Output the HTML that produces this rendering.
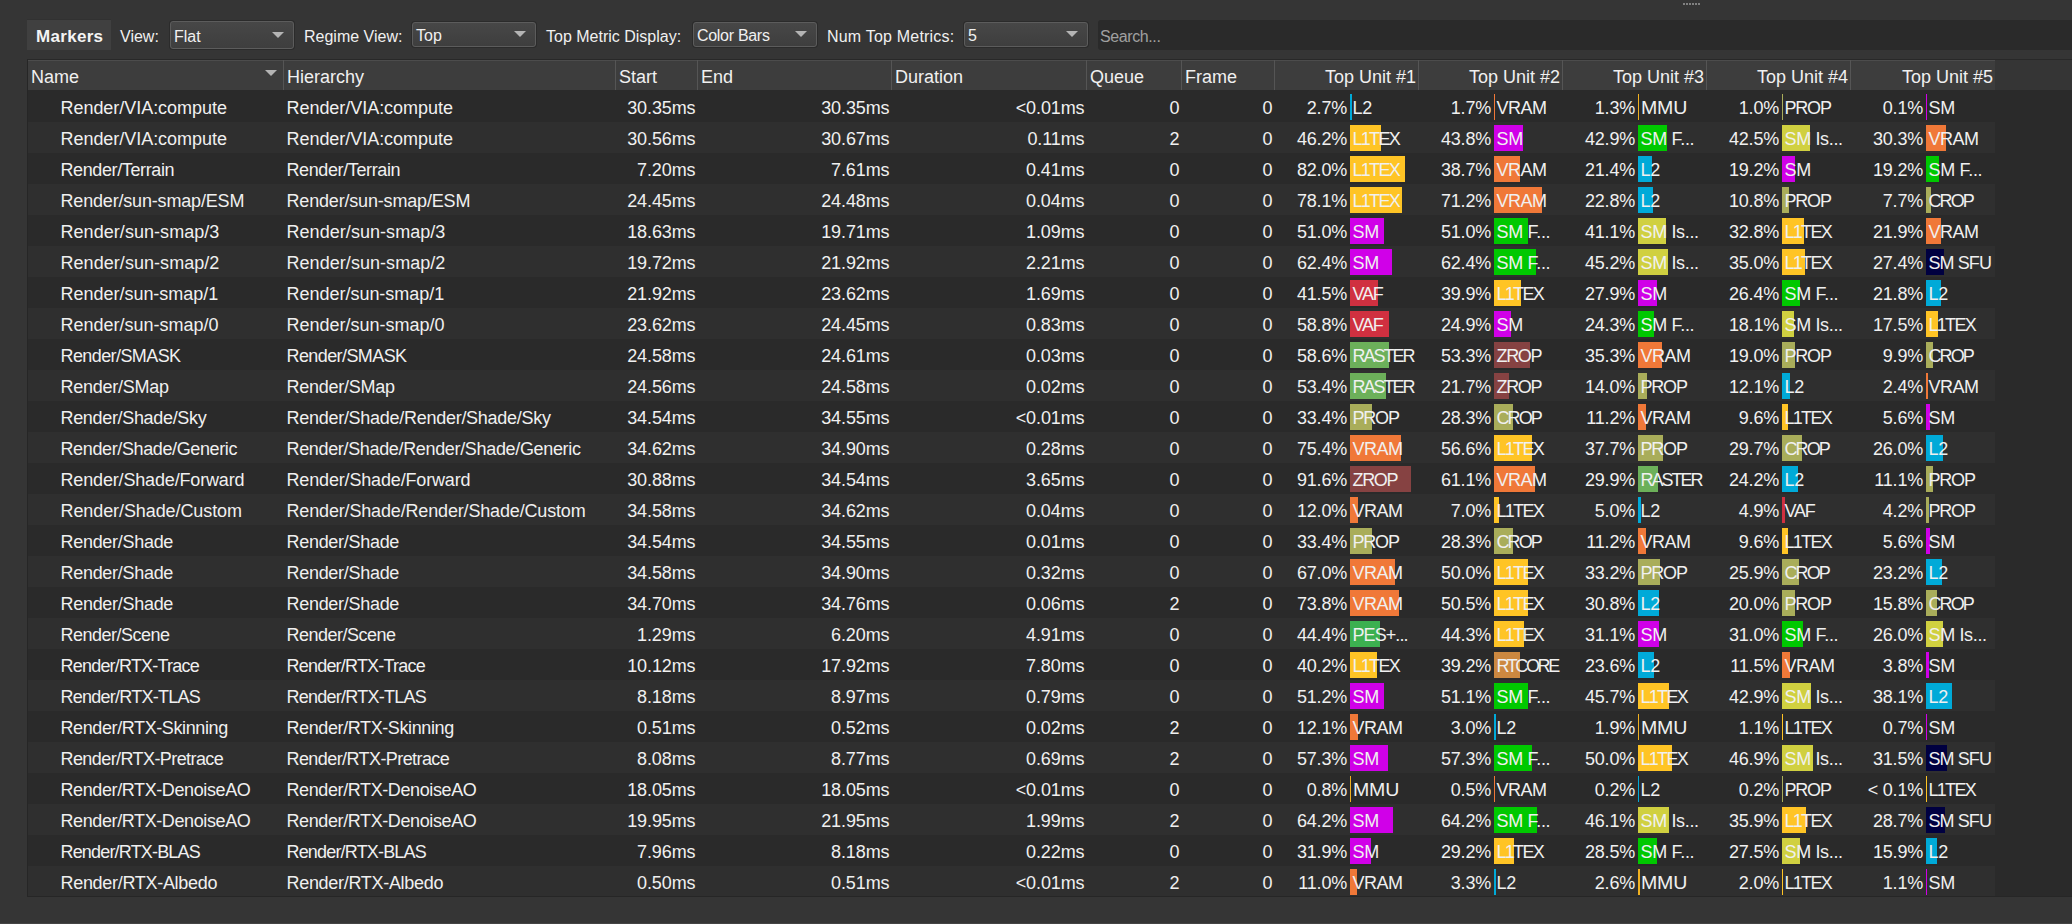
<!DOCTYPE html><html><head><meta charset="utf-8"><style>
html,body{margin:0;padding:0;width:2072px;height:924px;overflow:hidden;background:#353535;}
body{position:relative;font-family:"Liberation Sans",sans-serif;color:#f0f0f0;}
.a{position:absolute;white-space:pre;}
.tb{font-size:16px;line-height:28px;margin-top:2px;}
.combo{position:absolute;width:122px;border:1px solid #5c5c5c;border-radius:3px;background:linear-gradient(#474747,#3e3e3e);box-shadow:0 0 0 1px #2b2b2b;}
.combo .v{position:absolute;left:4px;top:2px;line-height:26px;font-size:16px;}
.tri{position:absolute;width:0;height:0;border-left:6px solid transparent;border-right:6px solid transparent;border-top:6px solid #b4b4b4;}
.t{font-size:18px;letter-spacing:-0.2px;line-height:31px;height:31px;margin-top:2px;}
.r{text-align:right;}
.bar{position:absolute;height:26px;}
</style></head><body>

<div class="a" style="left:1683px;top:3px;width:2px;height:2px;background:#808080"></div>
<div class="a" style="left:1686px;top:3px;width:2px;height:2px;background:#808080"></div>
<div class="a" style="left:1689px;top:3px;width:2px;height:2px;background:#808080"></div>
<div class="a" style="left:1692px;top:3px;width:2px;height:2px;background:#808080"></div>
<div class="a" style="left:1695px;top:3px;width:2px;height:2px;background:#808080"></div>
<div class="a" style="left:1698px;top:3px;width:2px;height:2px;background:#808080"></div>
<div class="a" style="left:27px;top:20px;width:84px;height:30px;background:#404040"></div>
<div class="a" style="left:27px;top:19px;width:84px;height:1px;background:#313131"></div>
<div class="a" style="left:36px;top:23px;font:bold 17px/28px 'Liberation Sans';color:#f4f4f4;letter-spacing:0.3px">Markers</div>
<div class="a tb" style="left:120px;top:21px">View:</div>
<div class="a tb" style="left:304px;top:21px">Regime View:</div>
<div class="a tb" style="left:546px;top:21px">Top Metric Display:</div>
<div class="a tb" style="left:827px;top:21px;letter-spacing:0.2px">Num Top Metrics:</div>
<div class="combo" style="left:170px;top:21px;height:26px"><div class="v" style="left:3px;top:2px;letter-spacing:0">Flat</div><div class="tri" style="left:101px;top:10px"></div></div>
<div class="combo" style="left:412px;top:22px;height:23px"><div class="v" style="left:3px;top:0px;letter-spacing:0">Top</div><div class="tri" style="left:101px;top:8px"></div></div>
<div class="combo" style="left:693px;top:22px;height:23px"><div class="v" style="left:3px;top:0px;letter-spacing:-0.3px">Color Bars</div><div class="tri" style="left:101px;top:8px"></div></div>
<div class="combo" style="left:964px;top:22px;height:23px"><div class="v" style="left:3px;top:0px;letter-spacing:0">5</div><div class="tri" style="left:101px;top:8px"></div></div>
<div class="a" style="left:1098px;top:20px;width:980px;height:30px;background:#2a2a2a;border-radius:3px"></div>
<div class="a tb" style="left:1100px;top:21px;color:#a0a0a0;letter-spacing:-0.4px">Search...</div>
<div class="a" style="left:27px;top:59px;width:2045px;height:838px;background:#2a2a2a"></div>
<div class="a" style="left:28px;top:60px;width:2044px;height:30px;background:#353535"></div>
<div class="a" style="left:0;top:923px;width:2072px;height:1px;background:#444444"></div>
<div class="a" style="left:28px;top:60px;width:1967px;height:30px;background:#3d3d3d;border-top:1px solid #4c4c4c;box-sizing:border-box"></div>
<div class="a" style="left:27px;top:59px;width:2045px;height:1px;background:#282828"></div>
<div class="a" style="left:27px;top:59px;width:1px;height:838px;background:#262626"></div>
<div class="a" style="left:283px;top:60px;width:1px;height:30px;background:#555555"></div>
<div class="a" style="left:615px;top:60px;width:1px;height:30px;background:#555555"></div>
<div class="a" style="left:697px;top:60px;width:1px;height:30px;background:#555555"></div>
<div class="a" style="left:891px;top:60px;width:1px;height:30px;background:#555555"></div>
<div class="a" style="left:1086px;top:60px;width:1px;height:30px;background:#555555"></div>
<div class="a" style="left:1181px;top:60px;width:1px;height:30px;background:#555555"></div>
<div class="a" style="left:1274px;top:60px;width:1px;height:30px;background:#555555"></div>
<div class="a" style="left:1418px;top:60px;width:1px;height:30px;background:#555555"></div>
<div class="a" style="left:1562px;top:60px;width:1px;height:30px;background:#555555"></div>
<div class="a" style="left:1706px;top:60px;width:1px;height:30px;background:#555555"></div>
<div class="a" style="left:1850px;top:60px;width:1px;height:30px;background:#555555"></div>
<div class="a t" style="left:31px;top:60px;letter-spacing:0">Name</div>
<div class="a t" style="left:287px;top:60px;letter-spacing:0">Hierarchy</div>
<div class="a t" style="left:619px;top:60px;letter-spacing:0">Start</div>
<div class="a t" style="left:701px;top:60px;letter-spacing:0">End</div>
<div class="a t" style="left:895px;top:60px;letter-spacing:0">Duration</div>
<div class="a t" style="left:1090px;top:60px;letter-spacing:0">Queue</div>
<div class="a t" style="left:1185px;top:60px;letter-spacing:0">Frame</div>
<div class="a t r" style="left:1274px;width:142px;top:60px;letter-spacing:0">Top Unit #1</div>
<div class="a t r" style="left:1418px;width:142px;top:60px;letter-spacing:0">Top Unit #2</div>
<div class="a t r" style="left:1562px;width:142px;top:60px;letter-spacing:0">Top Unit #3</div>
<div class="a t r" style="left:1706px;width:142px;top:60px;letter-spacing:0">Top Unit #4</div>
<div class="a t r" style="left:1850px;width:143px;top:60px;letter-spacing:0">Top Unit #5</div>
<div class="tri" style="left:265px;top:70px"></div>
<div class="a t" style="left:60.5px;top:91px;letter-spacing:-0.041px">Render/VIA:compute</div>
<div class="a t" style="left:286.5px;top:91px;letter-spacing:-0.041px">Render/VIA:compute</div>
<div class="a t r" style="left:615px;width:80.5px;top:91px;letter-spacing:-0.1px">30.35ms</div>
<div class="a t r" style="left:697px;width:192.5px;top:91px;letter-spacing:-0.1px">30.35ms</div>
<div class="a t r" style="left:891px;width:193.5px;top:91px;letter-spacing:-0.1px">&lt;0.01ms</div>
<div class="a t r" style="left:1086px;width:93.5px;top:91px;letter-spacing:-0.1px">0</div>
<div class="a t r" style="left:1181px;width:91.5px;top:91px;letter-spacing:-0.1px">0</div>
<div class="a t r" style="left:1274px;width:73px;top:91px">2.7%</div>
<div class="bar" style="left:1350px;top:94px;width:2px;background:#00aad8"></div>
<div class="a t" style="left:1352.5px;top:91px;letter-spacing:-0.20px">L2</div>
<div class="a t r" style="left:1418px;width:73px;top:91px">1.7%</div>
<div class="bar" style="left:1494px;top:94px;width:1px;background:#f07838"></div>
<div class="a t" style="left:1496.5px;top:91px;letter-spacing:-0.53px">VRAM</div>
<div class="a t r" style="left:1562px;width:73px;top:91px">1.3%</div>
<div class="bar" style="left:1638px;top:94px;width:1px;background:#f0b020"></div>
<div class="a t" style="left:1640.5px;top:91px;letter-spacing:-0.20px;transform:scaleX(1.087);transform-origin:0 0">MMU</div>
<div class="a t r" style="left:1706px;width:73px;top:91px">1.0%</div>
<div class="bar" style="left:1782px;top:94px;width:1px;background:#a9ad5a"></div>
<div class="a t" style="left:1784.5px;top:91px;letter-spacing:-1.20px">PROP</div>
<div class="a t r" style="left:1850px;width:73px;top:91px">0.1%</div>
<div class="bar" style="left:1926px;top:94px;width:1px;background:#d000e8"></div>
<div class="a t" style="left:1928.5px;top:91px;letter-spacing:-0.20px">SM</div>
<div class="a" style="left:28px;top:122px;width:1967px;height:31px;background:#2f2f2f"></div>
<div class="a t" style="left:60.5px;top:122px;letter-spacing:-0.041px">Render/VIA:compute</div>
<div class="a t" style="left:286.5px;top:122px;letter-spacing:-0.041px">Render/VIA:compute</div>
<div class="a t r" style="left:615px;width:80.5px;top:122px;letter-spacing:-0.1px">30.56ms</div>
<div class="a t r" style="left:697px;width:192.5px;top:122px;letter-spacing:-0.1px">30.67ms</div>
<div class="a t r" style="left:891px;width:193.5px;top:122px;letter-spacing:-0.1px">0.11ms</div>
<div class="a t r" style="left:1086px;width:93.5px;top:122px;letter-spacing:-0.1px">2</div>
<div class="a t r" style="left:1181px;width:91.5px;top:122px;letter-spacing:-0.1px">0</div>
<div class="a t r" style="left:1274px;width:73px;top:122px">46.2%</div>
<div class="bar" style="left:1350px;top:125px;width:31px;background:#ffc425"></div>
<div class="a t" style="left:1352.5px;top:122px;letter-spacing:-1.70px">L1TEX</div>
<div class="a t r" style="left:1418px;width:73px;top:122px">43.8%</div>
<div class="bar" style="left:1494px;top:125px;width:29px;background:#d000e8"></div>
<div class="a t" style="left:1496.5px;top:122px;letter-spacing:-0.20px">SM</div>
<div class="a t r" style="left:1562px;width:73px;top:122px">42.9%</div>
<div class="bar" style="left:1638px;top:125px;width:29px;background:#00c800"></div>
<div class="a t" style="left:1640.5px;top:122px;letter-spacing:-0.32px">SM F...</div>
<div class="a t r" style="left:1706px;width:73px;top:122px">42.5%</div>
<div class="bar" style="left:1782px;top:125px;width:28px;background:#d0d040"></div>
<div class="a t" style="left:1784.5px;top:122px;letter-spacing:-0.35px">SM Is...</div>
<div class="a t r" style="left:1850px;width:73px;top:122px">30.3%</div>
<div class="bar" style="left:1926px;top:125px;width:20px;background:#f07838"></div>
<div class="a t" style="left:1928.5px;top:122px;letter-spacing:-0.53px">VRAM</div>
<div class="a t" style="left:60.5px;top:153px;letter-spacing:-0.385px">Render/Terrain</div>
<div class="a t" style="left:286.5px;top:153px;letter-spacing:-0.385px">Render/Terrain</div>
<div class="a t r" style="left:615px;width:80.5px;top:153px;letter-spacing:-0.1px">7.20ms</div>
<div class="a t r" style="left:697px;width:192.5px;top:153px;letter-spacing:-0.1px">7.61ms</div>
<div class="a t r" style="left:891px;width:193.5px;top:153px;letter-spacing:-0.1px">0.41ms</div>
<div class="a t r" style="left:1086px;width:93.5px;top:153px;letter-spacing:-0.1px">0</div>
<div class="a t r" style="left:1181px;width:91.5px;top:153px;letter-spacing:-0.1px">0</div>
<div class="a t r" style="left:1274px;width:73px;top:153px">82.0%</div>
<div class="bar" style="left:1350px;top:156px;width:55px;background:#ffc425"></div>
<div class="a t" style="left:1352.5px;top:153px;letter-spacing:-1.70px">L1TEX</div>
<div class="a t r" style="left:1418px;width:73px;top:153px">38.7%</div>
<div class="bar" style="left:1494px;top:156px;width:26px;background:#f07838"></div>
<div class="a t" style="left:1496.5px;top:153px;letter-spacing:-0.53px">VRAM</div>
<div class="a t r" style="left:1562px;width:73px;top:153px">21.4%</div>
<div class="bar" style="left:1638px;top:156px;width:14px;background:#00aad8"></div>
<div class="a t" style="left:1640.5px;top:153px;letter-spacing:-0.20px">L2</div>
<div class="a t r" style="left:1706px;width:73px;top:153px">19.2%</div>
<div class="bar" style="left:1782px;top:156px;width:13px;background:#d000e8"></div>
<div class="a t" style="left:1784.5px;top:153px;letter-spacing:-0.20px">SM</div>
<div class="a t r" style="left:1850px;width:73px;top:153px">19.2%</div>
<div class="bar" style="left:1926px;top:156px;width:13px;background:#00c800"></div>
<div class="a t" style="left:1928.5px;top:153px;letter-spacing:-0.32px">SM F...</div>
<div class="a" style="left:28px;top:184px;width:1967px;height:31px;background:#2f2f2f"></div>
<div class="a t" style="left:60.5px;top:184px;letter-spacing:-0.178px">Render/sun-smap/ESM</div>
<div class="a t" style="left:286.5px;top:184px;letter-spacing:-0.178px">Render/sun-smap/ESM</div>
<div class="a t r" style="left:615px;width:80.5px;top:184px;letter-spacing:-0.1px">24.45ms</div>
<div class="a t r" style="left:697px;width:192.5px;top:184px;letter-spacing:-0.1px">24.48ms</div>
<div class="a t r" style="left:891px;width:193.5px;top:184px;letter-spacing:-0.1px">0.04ms</div>
<div class="a t r" style="left:1086px;width:93.5px;top:184px;letter-spacing:-0.1px">0</div>
<div class="a t r" style="left:1181px;width:91.5px;top:184px;letter-spacing:-0.1px">0</div>
<div class="a t r" style="left:1274px;width:73px;top:184px">78.1%</div>
<div class="bar" style="left:1350px;top:187px;width:52px;background:#ffc425"></div>
<div class="a t" style="left:1352.5px;top:184px;letter-spacing:-1.70px">L1TEX</div>
<div class="a t r" style="left:1418px;width:73px;top:184px">71.2%</div>
<div class="bar" style="left:1494px;top:187px;width:48px;background:#f07838"></div>
<div class="a t" style="left:1496.5px;top:184px;letter-spacing:-0.53px">VRAM</div>
<div class="a t r" style="left:1562px;width:73px;top:184px">22.8%</div>
<div class="bar" style="left:1638px;top:187px;width:15px;background:#00aad8"></div>
<div class="a t" style="left:1640.5px;top:184px;letter-spacing:-0.20px">L2</div>
<div class="a t r" style="left:1706px;width:73px;top:184px">10.8%</div>
<div class="bar" style="left:1782px;top:187px;width:7px;background:#a9ad5a"></div>
<div class="a t" style="left:1784.5px;top:184px;letter-spacing:-1.20px">PROP</div>
<div class="a t r" style="left:1850px;width:73px;top:184px">7.7%</div>
<div class="bar" style="left:1926px;top:187px;width:5px;background:#a9ad5a"></div>
<div class="a t" style="left:1928.5px;top:184px;letter-spacing:-1.93px">CROP</div>
<div class="a t" style="left:60.5px;top:215px;letter-spacing:0.05px">Render/sun-smap/3</div>
<div class="a t" style="left:286.5px;top:215px;letter-spacing:0.05px">Render/sun-smap/3</div>
<div class="a t r" style="left:615px;width:80.5px;top:215px;letter-spacing:-0.1px">18.63ms</div>
<div class="a t r" style="left:697px;width:192.5px;top:215px;letter-spacing:-0.1px">19.71ms</div>
<div class="a t r" style="left:891px;width:193.5px;top:215px;letter-spacing:-0.1px">1.09ms</div>
<div class="a t r" style="left:1086px;width:93.5px;top:215px;letter-spacing:-0.1px">0</div>
<div class="a t r" style="left:1181px;width:91.5px;top:215px;letter-spacing:-0.1px">0</div>
<div class="a t r" style="left:1274px;width:73px;top:215px">51.0%</div>
<div class="bar" style="left:1350px;top:218px;width:34px;background:#d000e8"></div>
<div class="a t" style="left:1352.5px;top:215px;letter-spacing:-0.20px">SM</div>
<div class="a t r" style="left:1418px;width:73px;top:215px">51.0%</div>
<div class="bar" style="left:1494px;top:218px;width:34px;background:#00c800"></div>
<div class="a t" style="left:1496.5px;top:215px;letter-spacing:-0.32px">SM F...</div>
<div class="a t r" style="left:1562px;width:73px;top:215px">41.1%</div>
<div class="bar" style="left:1638px;top:218px;width:28px;background:#d0d040"></div>
<div class="a t" style="left:1640.5px;top:215px;letter-spacing:-0.35px">SM Is...</div>
<div class="a t r" style="left:1706px;width:73px;top:215px">32.8%</div>
<div class="bar" style="left:1782px;top:218px;width:22px;background:#ffc425"></div>
<div class="a t" style="left:1784.5px;top:215px;letter-spacing:-1.70px">L1TEX</div>
<div class="a t r" style="left:1850px;width:73px;top:215px">21.9%</div>
<div class="bar" style="left:1926px;top:218px;width:15px;background:#f07838"></div>
<div class="a t" style="left:1928.5px;top:215px;letter-spacing:-0.53px">VRAM</div>
<div class="a" style="left:28px;top:246px;width:1967px;height:31px;background:#2f2f2f"></div>
<div class="a t" style="left:60.5px;top:246px;letter-spacing:0.05px">Render/sun-smap/2</div>
<div class="a t" style="left:286.5px;top:246px;letter-spacing:0.05px">Render/sun-smap/2</div>
<div class="a t r" style="left:615px;width:80.5px;top:246px;letter-spacing:-0.1px">19.72ms</div>
<div class="a t r" style="left:697px;width:192.5px;top:246px;letter-spacing:-0.1px">21.92ms</div>
<div class="a t r" style="left:891px;width:193.5px;top:246px;letter-spacing:-0.1px">2.21ms</div>
<div class="a t r" style="left:1086px;width:93.5px;top:246px;letter-spacing:-0.1px">0</div>
<div class="a t r" style="left:1181px;width:91.5px;top:246px;letter-spacing:-0.1px">0</div>
<div class="a t r" style="left:1274px;width:73px;top:246px">62.4%</div>
<div class="bar" style="left:1350px;top:249px;width:42px;background:#d000e8"></div>
<div class="a t" style="left:1352.5px;top:246px;letter-spacing:-0.20px">SM</div>
<div class="a t r" style="left:1418px;width:73px;top:246px">62.4%</div>
<div class="bar" style="left:1494px;top:249px;width:42px;background:#00c800"></div>
<div class="a t" style="left:1496.5px;top:246px;letter-spacing:-0.32px">SM F...</div>
<div class="a t r" style="left:1562px;width:73px;top:246px">45.2%</div>
<div class="bar" style="left:1638px;top:249px;width:30px;background:#d0d040"></div>
<div class="a t" style="left:1640.5px;top:246px;letter-spacing:-0.35px">SM Is...</div>
<div class="a t r" style="left:1706px;width:73px;top:246px">35.0%</div>
<div class="bar" style="left:1782px;top:249px;width:23px;background:#ffc425"></div>
<div class="a t" style="left:1784.5px;top:246px;letter-spacing:-1.70px">L1TEX</div>
<div class="a t r" style="left:1850px;width:73px;top:246px">27.4%</div>
<div class="bar" style="left:1926px;top:249px;width:18px;background:#000040"></div>
<div class="a t" style="left:1928.5px;top:246px;letter-spacing:-0.91px">SM SFU</div>
<div class="a t" style="left:60.5px;top:277px;letter-spacing:-0.019px">Render/sun-smap/1</div>
<div class="a t" style="left:286.5px;top:277px;letter-spacing:-0.019px">Render/sun-smap/1</div>
<div class="a t r" style="left:615px;width:80.5px;top:277px;letter-spacing:-0.1px">21.92ms</div>
<div class="a t r" style="left:697px;width:192.5px;top:277px;letter-spacing:-0.1px">23.62ms</div>
<div class="a t r" style="left:891px;width:193.5px;top:277px;letter-spacing:-0.1px">1.69ms</div>
<div class="a t r" style="left:1086px;width:93.5px;top:277px;letter-spacing:-0.1px">0</div>
<div class="a t r" style="left:1181px;width:91.5px;top:277px;letter-spacing:-0.1px">0</div>
<div class="a t r" style="left:1274px;width:73px;top:277px">41.5%</div>
<div class="bar" style="left:1350px;top:280px;width:28px;background:#d03040"></div>
<div class="a t" style="left:1352.5px;top:277px;letter-spacing:-1.20px">VAF</div>
<div class="a t r" style="left:1418px;width:73px;top:277px">39.9%</div>
<div class="bar" style="left:1494px;top:280px;width:27px;background:#ffc425"></div>
<div class="a t" style="left:1496.5px;top:277px;letter-spacing:-1.70px">L1TEX</div>
<div class="a t r" style="left:1562px;width:73px;top:277px">27.9%</div>
<div class="bar" style="left:1638px;top:280px;width:19px;background:#d000e8"></div>
<div class="a t" style="left:1640.5px;top:277px;letter-spacing:-0.20px">SM</div>
<div class="a t r" style="left:1706px;width:73px;top:277px">26.4%</div>
<div class="bar" style="left:1782px;top:280px;width:18px;background:#00c800"></div>
<div class="a t" style="left:1784.5px;top:277px;letter-spacing:-0.32px">SM F...</div>
<div class="a t r" style="left:1850px;width:73px;top:277px">21.8%</div>
<div class="bar" style="left:1926px;top:280px;width:15px;background:#00aad8"></div>
<div class="a t" style="left:1928.5px;top:277px;letter-spacing:-0.20px">L2</div>
<div class="a" style="left:28px;top:308px;width:1967px;height:31px;background:#2f2f2f"></div>
<div class="a t" style="left:60.5px;top:308px;letter-spacing:0.0px">Render/sun-smap/0</div>
<div class="a t" style="left:286.5px;top:308px;letter-spacing:0.0px">Render/sun-smap/0</div>
<div class="a t r" style="left:615px;width:80.5px;top:308px;letter-spacing:-0.1px">23.62ms</div>
<div class="a t r" style="left:697px;width:192.5px;top:308px;letter-spacing:-0.1px">24.45ms</div>
<div class="a t r" style="left:891px;width:193.5px;top:308px;letter-spacing:-0.1px">0.83ms</div>
<div class="a t r" style="left:1086px;width:93.5px;top:308px;letter-spacing:-0.1px">0</div>
<div class="a t r" style="left:1181px;width:91.5px;top:308px;letter-spacing:-0.1px">0</div>
<div class="a t r" style="left:1274px;width:73px;top:308px">58.8%</div>
<div class="bar" style="left:1350px;top:311px;width:39px;background:#d03040"></div>
<div class="a t" style="left:1352.5px;top:308px;letter-spacing:-1.20px">VAF</div>
<div class="a t r" style="left:1418px;width:73px;top:308px">24.9%</div>
<div class="bar" style="left:1494px;top:311px;width:17px;background:#d000e8"></div>
<div class="a t" style="left:1496.5px;top:308px;letter-spacing:-0.20px">SM</div>
<div class="a t r" style="left:1562px;width:73px;top:308px">24.3%</div>
<div class="bar" style="left:1638px;top:311px;width:16px;background:#00c800"></div>
<div class="a t" style="left:1640.5px;top:308px;letter-spacing:-0.32px">SM F...</div>
<div class="a t r" style="left:1706px;width:73px;top:308px">18.1%</div>
<div class="bar" style="left:1782px;top:311px;width:12px;background:#d0d040"></div>
<div class="a t" style="left:1784.5px;top:308px;letter-spacing:-0.35px">SM Is...</div>
<div class="a t r" style="left:1850px;width:73px;top:308px">17.5%</div>
<div class="bar" style="left:1926px;top:311px;width:12px;background:#ffc425"></div>
<div class="a t" style="left:1928.5px;top:308px;letter-spacing:-1.70px">L1TEX</div>
<div class="a t" style="left:60.5px;top:339px;letter-spacing:-0.591px">Render/SMASK</div>
<div class="a t" style="left:286.5px;top:339px;letter-spacing:-0.591px">Render/SMASK</div>
<div class="a t r" style="left:615px;width:80.5px;top:339px;letter-spacing:-0.1px">24.58ms</div>
<div class="a t r" style="left:697px;width:192.5px;top:339px;letter-spacing:-0.1px">24.61ms</div>
<div class="a t r" style="left:891px;width:193.5px;top:339px;letter-spacing:-0.1px">0.03ms</div>
<div class="a t r" style="left:1086px;width:93.5px;top:339px;letter-spacing:-0.1px">0</div>
<div class="a t r" style="left:1181px;width:91.5px;top:339px;letter-spacing:-0.1px">0</div>
<div class="a t r" style="left:1274px;width:73px;top:339px">58.6%</div>
<div class="bar" style="left:1350px;top:342px;width:39px;background:#6cb05a"></div>
<div class="a t" style="left:1352.5px;top:339px;letter-spacing:-2.00px">RASTER</div>
<div class="a t r" style="left:1418px;width:73px;top:339px">53.3%</div>
<div class="bar" style="left:1494px;top:342px;width:36px;background:#864242"></div>
<div class="a t" style="left:1496.5px;top:339px;letter-spacing:-1.33px">ZROP</div>
<div class="a t r" style="left:1562px;width:73px;top:339px">35.3%</div>
<div class="bar" style="left:1638px;top:342px;width:24px;background:#f07838"></div>
<div class="a t" style="left:1640.5px;top:339px;letter-spacing:-0.53px">VRAM</div>
<div class="a t r" style="left:1706px;width:73px;top:339px">19.0%</div>
<div class="bar" style="left:1782px;top:342px;width:13px;background:#a9ad5a"></div>
<div class="a t" style="left:1784.5px;top:339px;letter-spacing:-1.20px">PROP</div>
<div class="a t r" style="left:1850px;width:73px;top:339px">9.9%</div>
<div class="bar" style="left:1926px;top:342px;width:7px;background:#a9ad5a"></div>
<div class="a t" style="left:1928.5px;top:339px;letter-spacing:-1.93px">CROP</div>
<div class="a" style="left:28px;top:370px;width:1967px;height:31px;background:#2f2f2f"></div>
<div class="a t" style="left:60.5px;top:370px;letter-spacing:-0.25px">Render/SMap</div>
<div class="a t" style="left:286.5px;top:370px;letter-spacing:-0.25px">Render/SMap</div>
<div class="a t r" style="left:615px;width:80.5px;top:370px;letter-spacing:-0.1px">24.56ms</div>
<div class="a t r" style="left:697px;width:192.5px;top:370px;letter-spacing:-0.1px">24.58ms</div>
<div class="a t r" style="left:891px;width:193.5px;top:370px;letter-spacing:-0.1px">0.02ms</div>
<div class="a t r" style="left:1086px;width:93.5px;top:370px;letter-spacing:-0.1px">0</div>
<div class="a t r" style="left:1181px;width:91.5px;top:370px;letter-spacing:-0.1px">0</div>
<div class="a t r" style="left:1274px;width:73px;top:370px">53.4%</div>
<div class="bar" style="left:1350px;top:373px;width:36px;background:#6cb05a"></div>
<div class="a t" style="left:1352.5px;top:370px;letter-spacing:-2.00px">RASTER</div>
<div class="a t r" style="left:1418px;width:73px;top:370px">21.7%</div>
<div class="bar" style="left:1494px;top:373px;width:15px;background:#864242"></div>
<div class="a t" style="left:1496.5px;top:370px;letter-spacing:-1.33px">ZROP</div>
<div class="a t r" style="left:1562px;width:73px;top:370px">14.0%</div>
<div class="bar" style="left:1638px;top:373px;width:9px;background:#a9ad5a"></div>
<div class="a t" style="left:1640.5px;top:370px;letter-spacing:-1.20px">PROP</div>
<div class="a t r" style="left:1706px;width:73px;top:370px">12.1%</div>
<div class="bar" style="left:1782px;top:373px;width:8px;background:#00aad8"></div>
<div class="a t" style="left:1784.5px;top:370px;letter-spacing:-0.20px">L2</div>
<div class="a t r" style="left:1850px;width:73px;top:370px">2.4%</div>
<div class="bar" style="left:1926px;top:373px;width:2px;background:#f07838"></div>
<div class="a t" style="left:1928.5px;top:370px;letter-spacing:-0.53px">VRAM</div>
<div class="a t" style="left:60.5px;top:401px;letter-spacing:-0.327px">Render/Shade/Sky</div>
<div class="a t" style="left:286.5px;top:401px;letter-spacing:-0.275px">Render/Shade/Render/Shade/Sky</div>
<div class="a t r" style="left:615px;width:80.5px;top:401px;letter-spacing:-0.1px">34.54ms</div>
<div class="a t r" style="left:697px;width:192.5px;top:401px;letter-spacing:-0.1px">34.55ms</div>
<div class="a t r" style="left:891px;width:193.5px;top:401px;letter-spacing:-0.1px">&lt;0.01ms</div>
<div class="a t r" style="left:1086px;width:93.5px;top:401px;letter-spacing:-0.1px">0</div>
<div class="a t r" style="left:1181px;width:91.5px;top:401px;letter-spacing:-0.1px">0</div>
<div class="a t r" style="left:1274px;width:73px;top:401px">33.4%</div>
<div class="bar" style="left:1350px;top:404px;width:22px;background:#a9ad5a"></div>
<div class="a t" style="left:1352.5px;top:401px;letter-spacing:-1.20px">PROP</div>
<div class="a t r" style="left:1418px;width:73px;top:401px">28.3%</div>
<div class="bar" style="left:1494px;top:404px;width:19px;background:#a9ad5a"></div>
<div class="a t" style="left:1496.5px;top:401px;letter-spacing:-1.93px">CROP</div>
<div class="a t r" style="left:1562px;width:73px;top:401px">11.2%</div>
<div class="bar" style="left:1638px;top:404px;width:8px;background:#f07838"></div>
<div class="a t" style="left:1640.5px;top:401px;letter-spacing:-0.53px">VRAM</div>
<div class="a t r" style="left:1706px;width:73px;top:401px">9.6%</div>
<div class="bar" style="left:1782px;top:404px;width:6px;background:#ffc425"></div>
<div class="a t" style="left:1784.5px;top:401px;letter-spacing:-1.70px">L1TEX</div>
<div class="a t r" style="left:1850px;width:73px;top:401px">5.6%</div>
<div class="bar" style="left:1926px;top:404px;width:4px;background:#d000e8"></div>
<div class="a t" style="left:1928.5px;top:401px;letter-spacing:-0.20px">SM</div>
<div class="a" style="left:28px;top:432px;width:1967px;height:31px;background:#2f2f2f"></div>
<div class="a t" style="left:60.5px;top:432px;letter-spacing:-0.379px">Render/Shade/Generic</div>
<div class="a t" style="left:286.5px;top:432px;letter-spacing:-0.338px">Render/Shade/Render/Shade/Generic</div>
<div class="a t r" style="left:615px;width:80.5px;top:432px;letter-spacing:-0.1px">34.62ms</div>
<div class="a t r" style="left:697px;width:192.5px;top:432px;letter-spacing:-0.1px">34.90ms</div>
<div class="a t r" style="left:891px;width:193.5px;top:432px;letter-spacing:-0.1px">0.28ms</div>
<div class="a t r" style="left:1086px;width:93.5px;top:432px;letter-spacing:-0.1px">0</div>
<div class="a t r" style="left:1181px;width:91.5px;top:432px;letter-spacing:-0.1px">0</div>
<div class="a t r" style="left:1274px;width:73px;top:432px">75.4%</div>
<div class="bar" style="left:1350px;top:435px;width:51px;background:#f07838"></div>
<div class="a t" style="left:1352.5px;top:432px;letter-spacing:-0.53px">VRAM</div>
<div class="a t r" style="left:1418px;width:73px;top:432px">56.6%</div>
<div class="bar" style="left:1494px;top:435px;width:38px;background:#ffc425"></div>
<div class="a t" style="left:1496.5px;top:432px;letter-spacing:-1.70px">L1TEX</div>
<div class="a t r" style="left:1562px;width:73px;top:432px">37.7%</div>
<div class="bar" style="left:1638px;top:435px;width:25px;background:#a9ad5a"></div>
<div class="a t" style="left:1640.5px;top:432px;letter-spacing:-1.20px">PROP</div>
<div class="a t r" style="left:1706px;width:73px;top:432px">29.7%</div>
<div class="bar" style="left:1782px;top:435px;width:20px;background:#a9ad5a"></div>
<div class="a t" style="left:1784.5px;top:432px;letter-spacing:-1.93px">CROP</div>
<div class="a t r" style="left:1850px;width:73px;top:432px">26.0%</div>
<div class="bar" style="left:1926px;top:435px;width:17px;background:#00aad8"></div>
<div class="a t" style="left:1928.5px;top:432px;letter-spacing:-0.20px">L2</div>
<div class="a t" style="left:60.5px;top:463px;letter-spacing:-0.163px">Render/Shade/Forward</div>
<div class="a t" style="left:286.5px;top:463px;letter-spacing:-0.163px">Render/Shade/Forward</div>
<div class="a t r" style="left:615px;width:80.5px;top:463px;letter-spacing:-0.1px">30.88ms</div>
<div class="a t r" style="left:697px;width:192.5px;top:463px;letter-spacing:-0.1px">34.54ms</div>
<div class="a t r" style="left:891px;width:193.5px;top:463px;letter-spacing:-0.1px">3.65ms</div>
<div class="a t r" style="left:1086px;width:93.5px;top:463px;letter-spacing:-0.1px">0</div>
<div class="a t r" style="left:1181px;width:91.5px;top:463px;letter-spacing:-0.1px">0</div>
<div class="a t r" style="left:1274px;width:73px;top:463px">91.6%</div>
<div class="bar" style="left:1350px;top:466px;width:61px;background:#864242"></div>
<div class="a t" style="left:1352.5px;top:463px;letter-spacing:-1.33px">ZROP</div>
<div class="a t r" style="left:1418px;width:73px;top:463px">61.1%</div>
<div class="bar" style="left:1494px;top:466px;width:41px;background:#f07838"></div>
<div class="a t" style="left:1496.5px;top:463px;letter-spacing:-0.53px">VRAM</div>
<div class="a t r" style="left:1562px;width:73px;top:463px">29.9%</div>
<div class="bar" style="left:1638px;top:466px;width:20px;background:#6cb05a"></div>
<div class="a t" style="left:1640.5px;top:463px;letter-spacing:-2.00px">RASTER</div>
<div class="a t r" style="left:1706px;width:73px;top:463px">24.2%</div>
<div class="bar" style="left:1782px;top:466px;width:16px;background:#00aad8"></div>
<div class="a t" style="left:1784.5px;top:463px;letter-spacing:-0.20px">L2</div>
<div class="a t r" style="left:1850px;width:73px;top:463px">11.1%</div>
<div class="bar" style="left:1926px;top:466px;width:7px;background:#a9ad5a"></div>
<div class="a t" style="left:1928.5px;top:463px;letter-spacing:-1.20px">PROP</div>
<div class="a" style="left:28px;top:494px;width:1967px;height:31px;background:#2f2f2f"></div>
<div class="a t" style="left:60.5px;top:494px;letter-spacing:-0.089px">Render/Shade/Custom</div>
<div class="a t" style="left:286.5px;top:494px;letter-spacing:-0.161px">Render/Shade/Render/Shade/Custom</div>
<div class="a t r" style="left:615px;width:80.5px;top:494px;letter-spacing:-0.1px">34.58ms</div>
<div class="a t r" style="left:697px;width:192.5px;top:494px;letter-spacing:-0.1px">34.62ms</div>
<div class="a t r" style="left:891px;width:193.5px;top:494px;letter-spacing:-0.1px">0.04ms</div>
<div class="a t r" style="left:1086px;width:93.5px;top:494px;letter-spacing:-0.1px">0</div>
<div class="a t r" style="left:1181px;width:91.5px;top:494px;letter-spacing:-0.1px">0</div>
<div class="a t r" style="left:1274px;width:73px;top:494px">12.0%</div>
<div class="bar" style="left:1350px;top:497px;width:8px;background:#f07838"></div>
<div class="a t" style="left:1352.5px;top:494px;letter-spacing:-0.53px">VRAM</div>
<div class="a t r" style="left:1418px;width:73px;top:494px">7.0%</div>
<div class="bar" style="left:1494px;top:497px;width:5px;background:#ffc425"></div>
<div class="a t" style="left:1496.5px;top:494px;letter-spacing:-1.70px">L1TEX</div>
<div class="a t r" style="left:1562px;width:73px;top:494px">5.0%</div>
<div class="bar" style="left:1638px;top:497px;width:3px;background:#00aad8"></div>
<div class="a t" style="left:1640.5px;top:494px;letter-spacing:-0.20px">L2</div>
<div class="a t r" style="left:1706px;width:73px;top:494px">4.9%</div>
<div class="bar" style="left:1782px;top:497px;width:3px;background:#d03040"></div>
<div class="a t" style="left:1784.5px;top:494px;letter-spacing:-1.20px">VAF</div>
<div class="a t r" style="left:1850px;width:73px;top:494px">4.2%</div>
<div class="bar" style="left:1926px;top:497px;width:3px;background:#a9ad5a"></div>
<div class="a t" style="left:1928.5px;top:494px;letter-spacing:-1.20px">PROP</div>
<div class="a t" style="left:60.5px;top:525px;letter-spacing:-0.291px">Render/Shade</div>
<div class="a t" style="left:286.5px;top:525px;letter-spacing:-0.291px">Render/Shade</div>
<div class="a t r" style="left:615px;width:80.5px;top:525px;letter-spacing:-0.1px">34.54ms</div>
<div class="a t r" style="left:697px;width:192.5px;top:525px;letter-spacing:-0.1px">34.55ms</div>
<div class="a t r" style="left:891px;width:193.5px;top:525px;letter-spacing:-0.1px">0.01ms</div>
<div class="a t r" style="left:1086px;width:93.5px;top:525px;letter-spacing:-0.1px">0</div>
<div class="a t r" style="left:1181px;width:91.5px;top:525px;letter-spacing:-0.1px">0</div>
<div class="a t r" style="left:1274px;width:73px;top:525px">33.4%</div>
<div class="bar" style="left:1350px;top:528px;width:22px;background:#a9ad5a"></div>
<div class="a t" style="left:1352.5px;top:525px;letter-spacing:-1.20px">PROP</div>
<div class="a t r" style="left:1418px;width:73px;top:525px">28.3%</div>
<div class="bar" style="left:1494px;top:528px;width:19px;background:#a9ad5a"></div>
<div class="a t" style="left:1496.5px;top:525px;letter-spacing:-1.93px">CROP</div>
<div class="a t r" style="left:1562px;width:73px;top:525px">11.2%</div>
<div class="bar" style="left:1638px;top:528px;width:8px;background:#f07838"></div>
<div class="a t" style="left:1640.5px;top:525px;letter-spacing:-0.53px">VRAM</div>
<div class="a t r" style="left:1706px;width:73px;top:525px">9.6%</div>
<div class="bar" style="left:1782px;top:528px;width:6px;background:#ffc425"></div>
<div class="a t" style="left:1784.5px;top:525px;letter-spacing:-1.70px">L1TEX</div>
<div class="a t r" style="left:1850px;width:73px;top:525px">5.6%</div>
<div class="bar" style="left:1926px;top:528px;width:4px;background:#d000e8"></div>
<div class="a t" style="left:1928.5px;top:525px;letter-spacing:-0.20px">SM</div>
<div class="a" style="left:28px;top:556px;width:1967px;height:31px;background:#2f2f2f"></div>
<div class="a t" style="left:60.5px;top:556px;letter-spacing:-0.291px">Render/Shade</div>
<div class="a t" style="left:286.5px;top:556px;letter-spacing:-0.291px">Render/Shade</div>
<div class="a t r" style="left:615px;width:80.5px;top:556px;letter-spacing:-0.1px">34.58ms</div>
<div class="a t r" style="left:697px;width:192.5px;top:556px;letter-spacing:-0.1px">34.90ms</div>
<div class="a t r" style="left:891px;width:193.5px;top:556px;letter-spacing:-0.1px">0.32ms</div>
<div class="a t r" style="left:1086px;width:93.5px;top:556px;letter-spacing:-0.1px">0</div>
<div class="a t r" style="left:1181px;width:91.5px;top:556px;letter-spacing:-0.1px">0</div>
<div class="a t r" style="left:1274px;width:73px;top:556px">67.0%</div>
<div class="bar" style="left:1350px;top:559px;width:45px;background:#f07838"></div>
<div class="a t" style="left:1352.5px;top:556px;letter-spacing:-0.53px">VRAM</div>
<div class="a t r" style="left:1418px;width:73px;top:556px">50.0%</div>
<div class="bar" style="left:1494px;top:559px;width:34px;background:#ffc425"></div>
<div class="a t" style="left:1496.5px;top:556px;letter-spacing:-1.70px">L1TEX</div>
<div class="a t r" style="left:1562px;width:73px;top:556px">33.2%</div>
<div class="bar" style="left:1638px;top:559px;width:22px;background:#a9ad5a"></div>
<div class="a t" style="left:1640.5px;top:556px;letter-spacing:-1.20px">PROP</div>
<div class="a t r" style="left:1706px;width:73px;top:556px">25.9%</div>
<div class="bar" style="left:1782px;top:559px;width:17px;background:#a9ad5a"></div>
<div class="a t" style="left:1784.5px;top:556px;letter-spacing:-1.93px">CROP</div>
<div class="a t r" style="left:1850px;width:73px;top:556px">23.2%</div>
<div class="bar" style="left:1926px;top:559px;width:16px;background:#00aad8"></div>
<div class="a t" style="left:1928.5px;top:556px;letter-spacing:-0.20px">L2</div>
<div class="a t" style="left:60.5px;top:587px;letter-spacing:-0.291px">Render/Shade</div>
<div class="a t" style="left:286.5px;top:587px;letter-spacing:-0.291px">Render/Shade</div>
<div class="a t r" style="left:615px;width:80.5px;top:587px;letter-spacing:-0.1px">34.70ms</div>
<div class="a t r" style="left:697px;width:192.5px;top:587px;letter-spacing:-0.1px">34.76ms</div>
<div class="a t r" style="left:891px;width:193.5px;top:587px;letter-spacing:-0.1px">0.06ms</div>
<div class="a t r" style="left:1086px;width:93.5px;top:587px;letter-spacing:-0.1px">2</div>
<div class="a t r" style="left:1181px;width:91.5px;top:587px;letter-spacing:-0.1px">0</div>
<div class="a t r" style="left:1274px;width:73px;top:587px">73.8%</div>
<div class="bar" style="left:1350px;top:590px;width:49px;background:#f07838"></div>
<div class="a t" style="left:1352.5px;top:587px;letter-spacing:-0.53px">VRAM</div>
<div class="a t r" style="left:1418px;width:73px;top:587px">50.5%</div>
<div class="bar" style="left:1494px;top:590px;width:34px;background:#ffc425"></div>
<div class="a t" style="left:1496.5px;top:587px;letter-spacing:-1.70px">L1TEX</div>
<div class="a t r" style="left:1562px;width:73px;top:587px">30.8%</div>
<div class="bar" style="left:1638px;top:590px;width:21px;background:#00aad8"></div>
<div class="a t" style="left:1640.5px;top:587px;letter-spacing:-0.20px">L2</div>
<div class="a t r" style="left:1706px;width:73px;top:587px">20.0%</div>
<div class="bar" style="left:1782px;top:590px;width:13px;background:#a9ad5a"></div>
<div class="a t" style="left:1784.5px;top:587px;letter-spacing:-1.20px">PROP</div>
<div class="a t r" style="left:1850px;width:73px;top:587px">15.8%</div>
<div class="bar" style="left:1926px;top:590px;width:11px;background:#a9ad5a"></div>
<div class="a t" style="left:1928.5px;top:587px;letter-spacing:-1.93px">CROP</div>
<div class="a" style="left:28px;top:618px;width:1967px;height:31px;background:#2f2f2f"></div>
<div class="a t" style="left:60.5px;top:618px;letter-spacing:-0.509px">Render/Scene</div>
<div class="a t" style="left:286.5px;top:618px;letter-spacing:-0.509px">Render/Scene</div>
<div class="a t r" style="left:615px;width:80.5px;top:618px;letter-spacing:-0.1px">1.29ms</div>
<div class="a t r" style="left:697px;width:192.5px;top:618px;letter-spacing:-0.1px">6.20ms</div>
<div class="a t r" style="left:891px;width:193.5px;top:618px;letter-spacing:-0.1px">4.91ms</div>
<div class="a t r" style="left:1086px;width:93.5px;top:618px;letter-spacing:-0.1px">0</div>
<div class="a t r" style="left:1181px;width:91.5px;top:618px;letter-spacing:-0.1px">0</div>
<div class="a t r" style="left:1274px;width:73px;top:618px">44.4%</div>
<div class="bar" style="left:1350px;top:621px;width:30px;background:#3cb050"></div>
<div class="a t" style="left:1352.5px;top:618px;letter-spacing:-0.92px">PES+...</div>
<div class="a t r" style="left:1418px;width:73px;top:618px">44.3%</div>
<div class="bar" style="left:1494px;top:621px;width:30px;background:#ffc425"></div>
<div class="a t" style="left:1496.5px;top:618px;letter-spacing:-1.70px">L1TEX</div>
<div class="a t r" style="left:1562px;width:73px;top:618px">31.1%</div>
<div class="bar" style="left:1638px;top:621px;width:21px;background:#d000e8"></div>
<div class="a t" style="left:1640.5px;top:618px;letter-spacing:-0.20px">SM</div>
<div class="a t r" style="left:1706px;width:73px;top:618px">31.0%</div>
<div class="bar" style="left:1782px;top:621px;width:21px;background:#00c800"></div>
<div class="a t" style="left:1784.5px;top:618px;letter-spacing:-0.32px">SM F...</div>
<div class="a t r" style="left:1850px;width:73px;top:618px">26.0%</div>
<div class="bar" style="left:1926px;top:621px;width:17px;background:#d0d040"></div>
<div class="a t" style="left:1928.5px;top:618px;letter-spacing:-0.35px">SM Is...</div>
<div class="a t" style="left:60.5px;top:649px;letter-spacing:-0.787px">Render/RTX-Trace</div>
<div class="a t" style="left:286.5px;top:649px;letter-spacing:-0.787px">Render/RTX-Trace</div>
<div class="a t r" style="left:615px;width:80.5px;top:649px;letter-spacing:-0.1px">10.12ms</div>
<div class="a t r" style="left:697px;width:192.5px;top:649px;letter-spacing:-0.1px">17.92ms</div>
<div class="a t r" style="left:891px;width:193.5px;top:649px;letter-spacing:-0.1px">7.80ms</div>
<div class="a t r" style="left:1086px;width:93.5px;top:649px;letter-spacing:-0.1px">0</div>
<div class="a t r" style="left:1181px;width:91.5px;top:649px;letter-spacing:-0.1px">0</div>
<div class="a t r" style="left:1274px;width:73px;top:649px">40.2%</div>
<div class="bar" style="left:1350px;top:652px;width:27px;background:#ffc425"></div>
<div class="a t" style="left:1352.5px;top:649px;letter-spacing:-1.70px">L1TEX</div>
<div class="a t r" style="left:1418px;width:73px;top:649px">39.2%</div>
<div class="bar" style="left:1494px;top:652px;width:26px;background:#cc8840"></div>
<div class="a t" style="left:1496.5px;top:649px;letter-spacing:-2.40px">RTCORE</div>
<div class="a t r" style="left:1562px;width:73px;top:649px">23.6%</div>
<div class="bar" style="left:1638px;top:652px;width:16px;background:#00aad8"></div>
<div class="a t" style="left:1640.5px;top:649px;letter-spacing:-0.20px">L2</div>
<div class="a t r" style="left:1706px;width:73px;top:649px">11.5%</div>
<div class="bar" style="left:1782px;top:652px;width:8px;background:#f07838"></div>
<div class="a t" style="left:1784.5px;top:649px;letter-spacing:-0.53px">VRAM</div>
<div class="a t r" style="left:1850px;width:73px;top:649px">3.8%</div>
<div class="bar" style="left:1926px;top:652px;width:3px;background:#d000e8"></div>
<div class="a t" style="left:1928.5px;top:649px;letter-spacing:-0.20px">SM</div>
<div class="a" style="left:28px;top:680px;width:1967px;height:31px;background:#2f2f2f"></div>
<div class="a t" style="left:60.5px;top:680px;letter-spacing:-0.75px">Render/RTX-TLAS</div>
<div class="a t" style="left:286.5px;top:680px;letter-spacing:-0.75px">Render/RTX-TLAS</div>
<div class="a t r" style="left:615px;width:80.5px;top:680px;letter-spacing:-0.1px">8.18ms</div>
<div class="a t r" style="left:697px;width:192.5px;top:680px;letter-spacing:-0.1px">8.97ms</div>
<div class="a t r" style="left:891px;width:193.5px;top:680px;letter-spacing:-0.1px">0.79ms</div>
<div class="a t r" style="left:1086px;width:93.5px;top:680px;letter-spacing:-0.1px">0</div>
<div class="a t r" style="left:1181px;width:91.5px;top:680px;letter-spacing:-0.1px">0</div>
<div class="a t r" style="left:1274px;width:73px;top:680px">51.2%</div>
<div class="bar" style="left:1350px;top:683px;width:34px;background:#d000e8"></div>
<div class="a t" style="left:1352.5px;top:680px;letter-spacing:-0.20px">SM</div>
<div class="a t r" style="left:1418px;width:73px;top:680px">51.1%</div>
<div class="bar" style="left:1494px;top:683px;width:34px;background:#00c800"></div>
<div class="a t" style="left:1496.5px;top:680px;letter-spacing:-0.32px">SM F...</div>
<div class="a t r" style="left:1562px;width:73px;top:680px">45.7%</div>
<div class="bar" style="left:1638px;top:683px;width:31px;background:#ffc425"></div>
<div class="a t" style="left:1640.5px;top:680px;letter-spacing:-1.70px">L1TEX</div>
<div class="a t r" style="left:1706px;width:73px;top:680px">42.9%</div>
<div class="bar" style="left:1782px;top:683px;width:29px;background:#d0d040"></div>
<div class="a t" style="left:1784.5px;top:680px;letter-spacing:-0.35px">SM Is...</div>
<div class="a t r" style="left:1850px;width:73px;top:680px">38.1%</div>
<div class="bar" style="left:1926px;top:683px;width:26px;background:#00aad8"></div>
<div class="a t" style="left:1928.5px;top:680px;letter-spacing:-0.20px">L2</div>
<div class="a t" style="left:60.5px;top:711px;letter-spacing:-0.394px">Render/RTX-Skinning</div>
<div class="a t" style="left:286.5px;top:711px;letter-spacing:-0.394px">Render/RTX-Skinning</div>
<div class="a t r" style="left:615px;width:80.5px;top:711px;letter-spacing:-0.1px">0.51ms</div>
<div class="a t r" style="left:697px;width:192.5px;top:711px;letter-spacing:-0.1px">0.52ms</div>
<div class="a t r" style="left:891px;width:193.5px;top:711px;letter-spacing:-0.1px">0.02ms</div>
<div class="a t r" style="left:1086px;width:93.5px;top:711px;letter-spacing:-0.1px">2</div>
<div class="a t r" style="left:1181px;width:91.5px;top:711px;letter-spacing:-0.1px">0</div>
<div class="a t r" style="left:1274px;width:73px;top:711px">12.1%</div>
<div class="bar" style="left:1350px;top:714px;width:8px;background:#f07838"></div>
<div class="a t" style="left:1352.5px;top:711px;letter-spacing:-0.53px">VRAM</div>
<div class="a t r" style="left:1418px;width:73px;top:711px">3.0%</div>
<div class="bar" style="left:1494px;top:714px;width:2px;background:#00aad8"></div>
<div class="a t" style="left:1496.5px;top:711px;letter-spacing:-0.20px">L2</div>
<div class="a t r" style="left:1562px;width:73px;top:711px">1.9%</div>
<div class="bar" style="left:1638px;top:714px;width:1px;background:#f0b020"></div>
<div class="a t" style="left:1640.5px;top:711px;letter-spacing:-0.20px;transform:scaleX(1.087);transform-origin:0 0">MMU</div>
<div class="a t r" style="left:1706px;width:73px;top:711px">1.1%</div>
<div class="bar" style="left:1782px;top:714px;width:1px;background:#ffc425"></div>
<div class="a t" style="left:1784.5px;top:711px;letter-spacing:-1.70px">L1TEX</div>
<div class="a t r" style="left:1850px;width:73px;top:711px">0.7%</div>
<div class="bar" style="left:1926px;top:714px;width:1px;background:#d000e8"></div>
<div class="a t" style="left:1928.5px;top:711px;letter-spacing:-0.20px">SM</div>
<div class="a" style="left:28px;top:742px;width:1967px;height:31px;background:#2f2f2f"></div>
<div class="a t" style="left:60.5px;top:742px;letter-spacing:-0.583px">Render/RTX-Pretrace</div>
<div class="a t" style="left:286.5px;top:742px;letter-spacing:-0.583px">Render/RTX-Pretrace</div>
<div class="a t r" style="left:615px;width:80.5px;top:742px;letter-spacing:-0.1px">8.08ms</div>
<div class="a t r" style="left:697px;width:192.5px;top:742px;letter-spacing:-0.1px">8.77ms</div>
<div class="a t r" style="left:891px;width:193.5px;top:742px;letter-spacing:-0.1px">0.69ms</div>
<div class="a t r" style="left:1086px;width:93.5px;top:742px;letter-spacing:-0.1px">2</div>
<div class="a t r" style="left:1181px;width:91.5px;top:742px;letter-spacing:-0.1px">0</div>
<div class="a t r" style="left:1274px;width:73px;top:742px">57.3%</div>
<div class="bar" style="left:1350px;top:745px;width:38px;background:#d000e8"></div>
<div class="a t" style="left:1352.5px;top:742px;letter-spacing:-0.20px">SM</div>
<div class="a t r" style="left:1418px;width:73px;top:742px">57.3%</div>
<div class="bar" style="left:1494px;top:745px;width:38px;background:#00c800"></div>
<div class="a t" style="left:1496.5px;top:742px;letter-spacing:-0.32px">SM F...</div>
<div class="a t r" style="left:1562px;width:73px;top:742px">50.0%</div>
<div class="bar" style="left:1638px;top:745px;width:34px;background:#ffc425"></div>
<div class="a t" style="left:1640.5px;top:742px;letter-spacing:-1.70px">L1TEX</div>
<div class="a t r" style="left:1706px;width:73px;top:742px">46.9%</div>
<div class="bar" style="left:1782px;top:745px;width:31px;background:#d0d040"></div>
<div class="a t" style="left:1784.5px;top:742px;letter-spacing:-0.35px">SM Is...</div>
<div class="a t r" style="left:1850px;width:73px;top:742px">31.5%</div>
<div class="bar" style="left:1926px;top:745px;width:21px;background:#000040"></div>
<div class="a t" style="left:1928.5px;top:742px;letter-spacing:-0.91px">SM SFU</div>
<div class="a t" style="left:60.5px;top:773px;letter-spacing:-0.395px">Render/RTX-DenoiseAO</div>
<div class="a t" style="left:286.5px;top:773px;letter-spacing:-0.395px">Render/RTX-DenoiseAO</div>
<div class="a t r" style="left:615px;width:80.5px;top:773px;letter-spacing:-0.1px">18.05ms</div>
<div class="a t r" style="left:697px;width:192.5px;top:773px;letter-spacing:-0.1px">18.05ms</div>
<div class="a t r" style="left:891px;width:193.5px;top:773px;letter-spacing:-0.1px">&lt;0.01ms</div>
<div class="a t r" style="left:1086px;width:93.5px;top:773px;letter-spacing:-0.1px">0</div>
<div class="a t r" style="left:1181px;width:91.5px;top:773px;letter-spacing:-0.1px">0</div>
<div class="a t r" style="left:1274px;width:73px;top:773px">0.8%</div>
<div class="bar" style="left:1350px;top:776px;width:1px;background:#f0b020"></div>
<div class="a t" style="left:1352.5px;top:773px;letter-spacing:-0.20px;transform:scaleX(1.087);transform-origin:0 0">MMU</div>
<div class="a t r" style="left:1418px;width:73px;top:773px">0.5%</div>
<div class="bar" style="left:1494px;top:776px;width:1px;background:#f07838"></div>
<div class="a t" style="left:1496.5px;top:773px;letter-spacing:-0.53px">VRAM</div>
<div class="a t r" style="left:1562px;width:73px;top:773px">0.2%</div>
<div class="bar" style="left:1638px;top:776px;width:1px;background:#00aad8"></div>
<div class="a t" style="left:1640.5px;top:773px;letter-spacing:-0.20px">L2</div>
<div class="a t r" style="left:1706px;width:73px;top:773px">0.2%</div>
<div class="bar" style="left:1782px;top:776px;width:1px;background:#a9ad5a"></div>
<div class="a t" style="left:1784.5px;top:773px;letter-spacing:-1.20px">PROP</div>
<div class="a t r" style="left:1850px;width:73px;top:773px">&lt; 0.1%</div>
<div class="bar" style="left:1926px;top:776px;width:1px;background:#ffc425"></div>
<div class="a t" style="left:1928.5px;top:773px;letter-spacing:-1.70px">L1TEX</div>
<div class="a" style="left:28px;top:804px;width:1967px;height:31px;background:#2f2f2f"></div>
<div class="a t" style="left:60.5px;top:804px;letter-spacing:-0.395px">Render/RTX-DenoiseAO</div>
<div class="a t" style="left:286.5px;top:804px;letter-spacing:-0.395px">Render/RTX-DenoiseAO</div>
<div class="a t r" style="left:615px;width:80.5px;top:804px;letter-spacing:-0.1px">19.95ms</div>
<div class="a t r" style="left:697px;width:192.5px;top:804px;letter-spacing:-0.1px">21.95ms</div>
<div class="a t r" style="left:891px;width:193.5px;top:804px;letter-spacing:-0.1px">1.99ms</div>
<div class="a t r" style="left:1086px;width:93.5px;top:804px;letter-spacing:-0.1px">2</div>
<div class="a t r" style="left:1181px;width:91.5px;top:804px;letter-spacing:-0.1px">0</div>
<div class="a t r" style="left:1274px;width:73px;top:804px">64.2%</div>
<div class="bar" style="left:1350px;top:807px;width:43px;background:#d000e8"></div>
<div class="a t" style="left:1352.5px;top:804px;letter-spacing:-0.20px">SM</div>
<div class="a t r" style="left:1418px;width:73px;top:804px">64.2%</div>
<div class="bar" style="left:1494px;top:807px;width:43px;background:#00c800"></div>
<div class="a t" style="left:1496.5px;top:804px;letter-spacing:-0.32px">SM F...</div>
<div class="a t r" style="left:1562px;width:73px;top:804px">46.1%</div>
<div class="bar" style="left:1638px;top:807px;width:31px;background:#d0d040"></div>
<div class="a t" style="left:1640.5px;top:804px;letter-spacing:-0.35px">SM Is...</div>
<div class="a t r" style="left:1706px;width:73px;top:804px">35.9%</div>
<div class="bar" style="left:1782px;top:807px;width:24px;background:#ffc425"></div>
<div class="a t" style="left:1784.5px;top:804px;letter-spacing:-1.70px">L1TEX</div>
<div class="a t r" style="left:1850px;width:73px;top:804px">28.7%</div>
<div class="bar" style="left:1926px;top:807px;width:19px;background:#000040"></div>
<div class="a t" style="left:1928.5px;top:804px;letter-spacing:-0.91px">SM SFU</div>
<div class="a t" style="left:60.5px;top:835px;letter-spacing:-0.821px">Render/RTX-BLAS</div>
<div class="a t" style="left:286.5px;top:835px;letter-spacing:-0.821px">Render/RTX-BLAS</div>
<div class="a t r" style="left:615px;width:80.5px;top:835px;letter-spacing:-0.1px">7.96ms</div>
<div class="a t r" style="left:697px;width:192.5px;top:835px;letter-spacing:-0.1px">8.18ms</div>
<div class="a t r" style="left:891px;width:193.5px;top:835px;letter-spacing:-0.1px">0.22ms</div>
<div class="a t r" style="left:1086px;width:93.5px;top:835px;letter-spacing:-0.1px">0</div>
<div class="a t r" style="left:1181px;width:91.5px;top:835px;letter-spacing:-0.1px">0</div>
<div class="a t r" style="left:1274px;width:73px;top:835px">31.9%</div>
<div class="bar" style="left:1350px;top:838px;width:21px;background:#d000e8"></div>
<div class="a t" style="left:1352.5px;top:835px;letter-spacing:-0.20px">SM</div>
<div class="a t r" style="left:1418px;width:73px;top:835px">29.2%</div>
<div class="bar" style="left:1494px;top:838px;width:20px;background:#ffc425"></div>
<div class="a t" style="left:1496.5px;top:835px;letter-spacing:-1.70px">L1TEX</div>
<div class="a t r" style="left:1562px;width:73px;top:835px">28.5%</div>
<div class="bar" style="left:1638px;top:838px;width:19px;background:#00c800"></div>
<div class="a t" style="left:1640.5px;top:835px;letter-spacing:-0.32px">SM F...</div>
<div class="a t r" style="left:1706px;width:73px;top:835px">27.5%</div>
<div class="bar" style="left:1782px;top:838px;width:18px;background:#d0d040"></div>
<div class="a t" style="left:1784.5px;top:835px;letter-spacing:-0.35px">SM Is...</div>
<div class="a t r" style="left:1850px;width:73px;top:835px">15.9%</div>
<div class="bar" style="left:1926px;top:838px;width:11px;background:#00aad8"></div>
<div class="a t" style="left:1928.5px;top:835px;letter-spacing:-0.20px">L2</div>
<div class="a" style="left:28px;top:866px;width:1967px;height:30px;background:#2f2f2f"></div>
<div class="a t" style="left:60.5px;top:866px;letter-spacing:-0.3px">Render/RTX-Albedo</div>
<div class="a t" style="left:286.5px;top:866px;letter-spacing:-0.3px">Render/RTX-Albedo</div>
<div class="a t r" style="left:615px;width:80.5px;top:866px;letter-spacing:-0.1px">0.50ms</div>
<div class="a t r" style="left:697px;width:192.5px;top:866px;letter-spacing:-0.1px">0.51ms</div>
<div class="a t r" style="left:891px;width:193.5px;top:866px;letter-spacing:-0.1px">&lt;0.01ms</div>
<div class="a t r" style="left:1086px;width:93.5px;top:866px;letter-spacing:-0.1px">2</div>
<div class="a t r" style="left:1181px;width:91.5px;top:866px;letter-spacing:-0.1px">0</div>
<div class="a t r" style="left:1274px;width:73px;top:866px">11.0%</div>
<div class="bar" style="left:1350px;top:869px;width:7px;background:#f07838"></div>
<div class="a t" style="left:1352.5px;top:866px;letter-spacing:-0.53px">VRAM</div>
<div class="a t r" style="left:1418px;width:73px;top:866px">3.3%</div>
<div class="bar" style="left:1494px;top:869px;width:2px;background:#00aad8"></div>
<div class="a t" style="left:1496.5px;top:866px;letter-spacing:-0.20px">L2</div>
<div class="a t r" style="left:1562px;width:73px;top:866px">2.6%</div>
<div class="bar" style="left:1638px;top:869px;width:2px;background:#f0b020"></div>
<div class="a t" style="left:1640.5px;top:866px;letter-spacing:-0.20px;transform:scaleX(1.087);transform-origin:0 0">MMU</div>
<div class="a t r" style="left:1706px;width:73px;top:866px">2.0%</div>
<div class="bar" style="left:1782px;top:869px;width:1px;background:#ffc425"></div>
<div class="a t" style="left:1784.5px;top:866px;letter-spacing:-1.70px">L1TEX</div>
<div class="a t r" style="left:1850px;width:73px;top:866px">1.1%</div>
<div class="bar" style="left:1926px;top:869px;width:1px;background:#d000e8"></div>
<div class="a t" style="left:1928.5px;top:866px;letter-spacing:-0.20px">SM</div>
<div class="a" style="left:27px;top:896px;width:2045px;height:1px;background:#262626"></div>
</body></html>
